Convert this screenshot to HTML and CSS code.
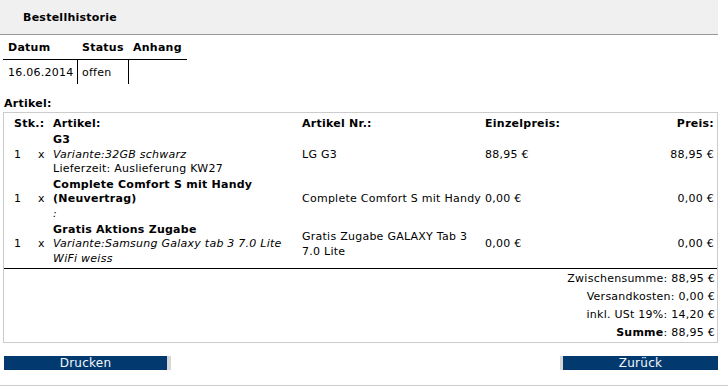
FILE: index.html
```html
<!DOCTYPE html>
<html lang="de">
<head>
  <meta charset="UTF-8" />
  <title>Bestellhistorie</title>
  <link rel="stylesheet" href="styles.css">
</head>
<body>
  <div class="title-bar">Bestellhistorie</div>

  <div class="content">
    <table class="order">
      <colgroup><col class="c-date"><col class="c-status"><col class="c-file"></colgroup>
      <thead>
        <tr><th>Datum</th><th>Status</th><th>Anhang</th></tr>
      </thead>
      <tbody>
        <tr><td>16.06.2014</td><td>offen</td><td></td></tr>
      </tbody>
    </table>

    <div class="section">Artikel:</div>

    <div class="items-box">
      <table class="items">
        <colgroup>
          <col class="c-qty"><col class="c-x"><col class="c-name"><col class="c-nr"><col class="c-single"><col class="c-price">
        </colgroup>
        <thead>
          <tr>
            <th colspan="2" class="qty">Stk.:</th>
            <th>Artikel:</th>
            <th>Artikel Nr.:</th>
            <th>Einzelpreis:</th>
            <th class="price">Preis:</th>
          </tr>
        </thead>
        <tbody>
          <tr>
            <td class="qty">1</td>
            <td class="x">x</td>
            <td><b>G3</b><br><i>Variante:32GB schwarz</i><br>Lieferzeit: Auslieferung KW27</td>
            <td>LG G3</td>
            <td>88,95 €</td>
            <td class="price">88,95 €</td>
          </tr>
          <tr>
            <td class="qty">1</td>
            <td class="x">x</td>
            <td><b>Complete Comfort S mit Handy (Neuvertrag)</b><br><i>:</i></td>
            <td>Complete Comfort S mit Handy</td>
            <td>0,00 €</td>
            <td class="price">0,00 €</td>
          </tr>
          <tr>
            <td class="qty">1</td>
            <td class="x">x</td>
            <td><b>Gratis Aktions Zugabe</b><br><i>Variante:Samsung Galaxy tab 3 7.0 Lite WiFi weiss</i></td>
            <td>Gratis Zugabe GALAXY Tab 3 7.0 Lite</td>
            <td>0,00 €</td>
            <td class="price">0,00 €</td>
          </tr>
        </tbody>
      </table>

      <div class="totals">
        <div>Zwischensumme: 88,95 €</div>
        <div>Versandkosten: 0,00 €</div>
        <div>inkl. USt 19%: 14,20 €</div>
        <div><b>Summe</b>: 88,95 €</div>
      </div>
    </div>

    <div class="buttons">
      <a href="#" class="btn btn-print">Drucken</a>
      <a href="#" class="btn btn-back">Zurück</a>
    </div>
  </div>

  <div class="bottom-line"></div>
</body>
</html>
```

FILE: styles.css
```css
html, body {
  margin: 0;
  padding: 0;
  background: #fff;
  color: #000;
  font-family: "DejaVu Sans", Verdana, sans-serif;
  font-size: 11px;
  letter-spacing: 0.25px;
}

.title-bar {
  width: 695px;
  height: 23px;
  padding: 11px 0 0 23px;
  line-height: 14px;
  background: #f0f0f0;
  border-bottom: 1px solid #999;
  font-weight: bold;
}

.content {
  width: 715px;
  padding-left: 3px;
}

/* order head table */
.order {
  table-layout: fixed;
  width: 184px;
  border-spacing: 0;
}

.order .c-date { width: 74px; }
.order .c-status { width: 51px; }
.order .c-file { width: 59px; }

.order th {
  text-align: left;
  padding: 6px 0 4px 5px;
  line-height: 14px;
  border-bottom: 1px solid #000;
}

.order td {
  padding: 6px 0 4px 5px;
  line-height: 14px;
  height: 14px;
}

.order td + td {
  padding-left: 4px;
  border-left: 1px solid #000;
}

.section {
  margin: 13px 0 1px 1px;
  line-height: 14px;
  font-weight: bold;
}

/* articles */
.items-box {
  padding-top: 2px;
  border: 1px solid #ccc;
}

.items {
  table-layout: fixed;
  width: 100%;
  border-spacing: 2px;
  border-bottom: 1px solid #000;
}

.items .c-qty { width: 28px; }
.items .c-x { width: 15px; }
.items .c-name { width: 247px; }
.items .c-nr { width: 181px; }
.items .c-single { width: 115px; }
.items .c-price { width: 113px; }

.items th, .items td {
  padding: 0;
  line-height: 14.3px;
  text-align: left;
  vertical-align: middle;
}

.items .qty { padding-left: 8px; }
.items .x { padding-left: 2px; }
.items .price { text-align: right; padding-right: 1px; }

.totals {
  padding: 1px 2px 0 0;
  text-align: right;
  line-height: 18px;
}

.buttons {
  display: flex;
  justify-content: space-between;
  margin-top: 13px;
}

.btn {
  display: block;
  height: 14px;
  line-height: 14px;
  background: #023a70;
  color: #f4f8fc;
  font-size: 12px;
  text-align: center;
  text-decoration: none;
}

.btn-print {
  width: 163px;
  margin-left: 1px;
  border-right: 4px solid #d6d6d6;
}

.btn-back {
  width: 155px;
  border-left: 3px solid #d6d6d6;
}

.bottom-line {
  margin-top: 15px;
  border-top: 1px solid #ccc;
}
```
